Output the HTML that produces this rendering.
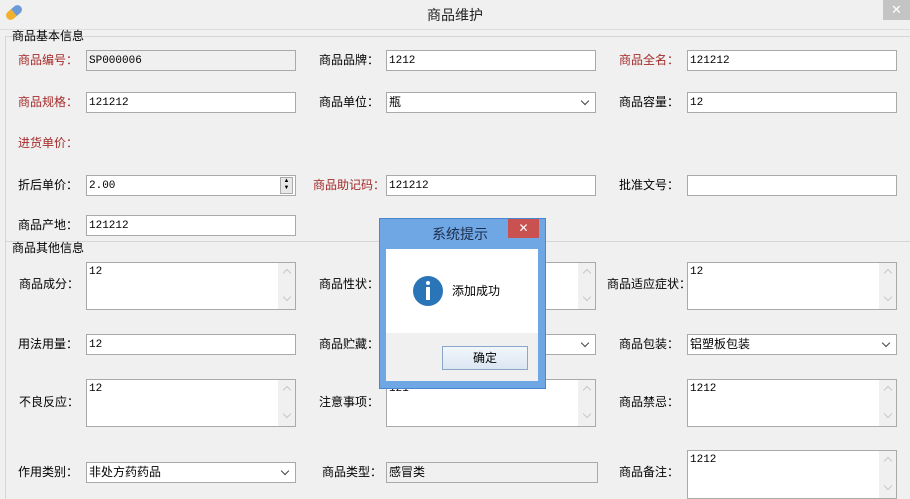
<!DOCTYPE html>
<html><head><meta charset="utf-8"><style>
*{box-sizing:border-box;margin:0;padding:0}
body{width:910px;height:499px;background:#f0f0f0;position:relative;overflow:hidden;font-family:"Liberation Sans","Noto Sans CJK SC","WenQuanYi Zen Hei",sans-serif;font-size:12px;color:#000}
.a{position:absolute}
.l{position:absolute;font-size:12px;line-height:14px;white-space:nowrap}
.r{color:#a52a2a}
.i{position:absolute;height:21px;background:#fff;border:1px solid #a9a9a9;font-family:"Liberation Mono","Noto Sans CJK SC",monospace;font-size:11px;padding:3px 0 0 2px;line-height:14px;white-space:nowrap}
.d{background:#f0f0f0}
.t{position:absolute;height:48px;background:#fff;border:1px solid #a9a9a9;font-family:"Liberation Mono",monospace;font-size:11px;padding:2px 0 0 2px;line-height:14px}
.t:after{content:"";position:absolute;right:0;top:0;width:17px;height:100%;background:#f0f0f0}
.t i,.t b{position:absolute;right:5px;width:6px;height:6px;border-left:1px solid #c8c8c8;border-top:1px solid #c8c8c8;z-index:2}
.t i{top:7px;transform:rotate(45deg)}
.t b{bottom:9px;transform:rotate(225deg)}
.s:after{content:"";position:absolute;right:7px;top:5px;width:5px;height:5px;border-right:1.5px solid #444;border-bottom:1.5px solid #444;transform:rotate(45deg)}
.s{font-family:"Liberation Sans","Noto Sans CJK SC",sans-serif;font-size:12px;padding-top:2px}
.n{font-family:"Liberation Sans","Noto Sans CJK SC",sans-serif;font-size:12px;padding-top:2px}
</style></head><body>
<!-- title bar -->
<div class="a" style="left:5px;top:8px;width:18px;height:9px;border-radius:5px;background:linear-gradient(90deg,#f0b030 50%,#6a9ad8 50%);transform:rotate(-40deg)"></div>
<div class="l" style="left:427px;top:7px;font-size:14px;line-height:16px;color:#222">商品维护</div>
<div class="a" style="left:883px;top:0;width:27px;height:20px;background:#c4c4c4;color:#fff;font-size:13px;text-align:center;line-height:20px">✕</div>
<div class="a" style="left:0;top:29px;width:910px;height:1px;background:#dcdcdc"></div>
<div class="a" style="left:5px;top:36px;width:905px;height:1px;background:#d5d5d5"></div>
<div class="a" style="left:5px;top:36px;width:1px;height:463px;background:#d5d5d5"></div>
<div class="l" style="left:12px;top:29px">商品基本信息</div>
<!-- row1 -->
<div class="l r" style="left:18px;top:53px">商品编号：</div>
<div class="i d" style="left:86px;top:50px;width:210px">SP000006</div>
<div class="l" style="left:319px;top:53px">商品品牌：</div>
<div class="i" style="left:386px;top:50px;width:210px">1212</div>
<div class="l r" style="left:619px;top:53px">商品全名：</div>
<div class="i" style="left:687px;top:50px;width:210px">121212</div>
<!-- row2 -->
<div class="l r" style="left:18px;top:95px">商品规格：</div>
<div class="i" style="left:86px;top:92px;width:210px">121212</div>
<div class="l" style="left:319px;top:95px">商品单位：</div>
<div class="i s" style="left:386px;top:92px;width:210px">瓶</div>
<div class="l" style="left:619px;top:95px">商品容量：</div>
<div class="i" style="left:687px;top:92px;width:210px">12</div>
<div class="l r" style="left:18px;top:136px">进货单价：</div>
<!-- row4 -->
<div class="l" style="left:18px;top:178px">折后单价：</div>
<div class="i" style="left:86px;top:175px;width:210px">2.00</div>
<div class="a" style="left:280px;top:177px;width:13px;height:17px;border:1px solid #aaa;background:#e8e8e8;font-size:6px;line-height:7px;text-align:center">▲<br>▼</div>
<div class="l r" style="left:313px;top:178px">商品助记码：</div>
<div class="i" style="left:386px;top:175px;width:210px">121212</div>
<div class="l" style="left:619px;top:178px">批准文号：</div>
<div class="i" style="left:687px;top:175px;width:210px"></div>
<div class="l" style="left:18px;top:218px">商品产地：</div>
<div class="i" style="left:86px;top:215px;width:210px">121212</div>
<!-- group 2 -->
<div class="a" style="left:5px;top:241px;width:905px;height:1px;background:#d5d5d5"></div>
<div class="l" style="left:12px;top:241px">商品其他信息</div>
<div class="l" style="left:19px;top:277px">商品成分：</div>
<div class="t" style="left:86px;top:262px;width:210px">12<i></i><b></b></div>
<div class="l" style="left:319px;top:277px">商品性状：</div>
<div class="t" style="left:386px;top:262px;width:210px"><i></i><b></b></div>
<div class="l" style="left:607px;top:277px">商品适应症状：</div>
<div class="t" style="left:687px;top:262px;width:210px">12<i></i><b></b></div>
<div class="l" style="left:18px;top:337px">用法用量：</div>
<div class="i" style="left:86px;top:334px;width:210px">12</div>
<div class="l" style="left:319px;top:337px">商品贮藏：</div>
<div class="i s" style="left:386px;top:334px;width:210px"></div>
<div class="l" style="left:619px;top:337px">商品包装：</div>
<div class="i s" style="left:687px;top:334px;width:210px">铝塑板包装</div>
<div class="l" style="left:19px;top:395px">不良反应：</div>
<div class="t" style="left:86px;top:379px;width:210px">12<i></i><b></b></div>
<div class="l" style="left:319px;top:395px">注意事项：</div>
<div class="t" style="left:386px;top:379px;width:210px">121<i></i><b></b></div>
<div class="l" style="left:619px;top:395px">商品禁忌：</div>
<div class="t" style="left:687px;top:379px;width:210px">1212<i></i><b></b></div>
<div class="l" style="left:18px;top:465px">作用类别：</div>
<div class="i s" style="left:86px;top:462px;width:210px">非处方药药品</div>
<div class="l" style="left:322px;top:465px">商品类型：</div>
<div class="i d n" style="left:386px;top:462px;width:212px">感冒类</div>
<div class="l" style="left:619px;top:465px">商品备注：</div>
<div class="t" style="left:687px;top:450px;width:210px;height:49px">1212<i></i><b></b></div>
<!-- dialog -->
<div class="a" style="left:379px;top:218px;width:167px;height:171px;background:#6fa6e4;border:1px solid #4a86cf"></div>
<div class="l" style="left:432px;top:226px;font-size:14px;line-height:16px;color:#1e2e4a">系统提示</div>
<div class="a" style="left:508px;top:219px;width:31px;height:19px;background:#c9514f;color:#fff;text-align:center;font-size:12px;line-height:19px">✕</div>
<div class="a" style="left:386px;top:249px;width:152px;height:84px;background:#fff"></div>
<div class="a" style="left:386px;top:333px;width:152px;height:48px;background:#f0f0f0"></div>
<div class="a" style="left:413px;top:276px;width:30px;height:30px;border-radius:50%;background:#2a74b8"></div>
<div class="a" style="left:426px;top:281px;width:4px;height:4px;border-radius:50%;background:#fff"></div>
<div class="a" style="left:426px;top:287px;width:4px;height:13px;background:#fff"></div>
<div class="l" style="left:452px;top:284px">添加成功</div>
<div class="a" style="left:442px;top:346px;width:86px;height:24px;border:1px solid #8aa6c8;background:linear-gradient(#f2f6fb,#dbe6f3);text-align:center;line-height:22px">确定</div>
</body></html>
